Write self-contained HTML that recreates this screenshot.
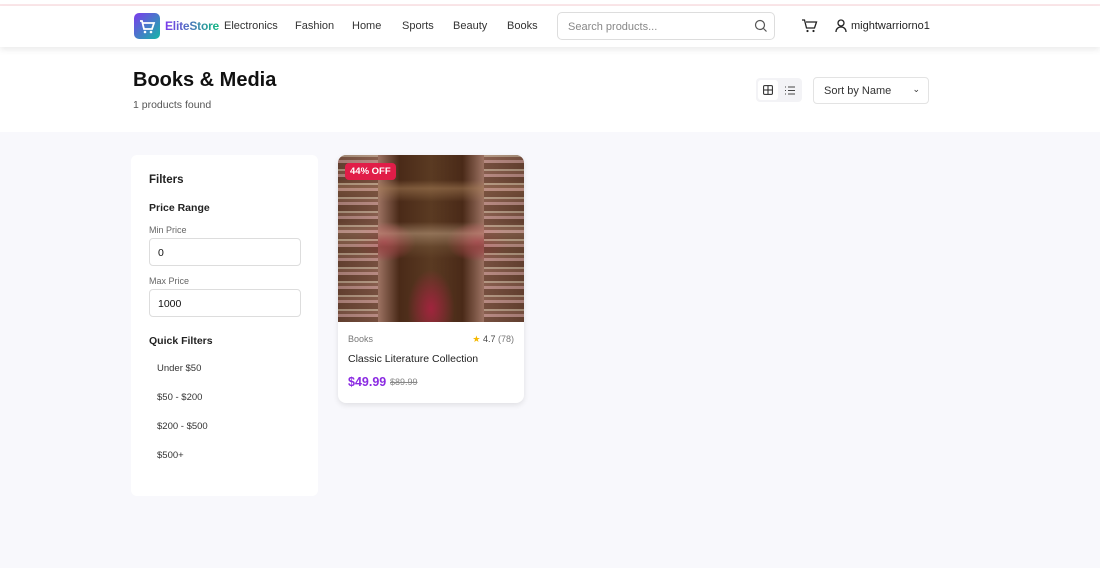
<!DOCTYPE html>
<html><head><meta charset="utf-8"><style>
*{box-sizing:border-box;margin:0;padding:0}
body{width:1100px;height:568px;overflow:hidden;background:#f8f8fc;font-family:"Liberation Sans",sans-serif;color:#111;position:relative}
.topline{position:absolute;left:0;top:0;width:1100px;height:6px;background:#fff;border-bottom:2px solid #fbe6e9}
header{position:absolute;left:0;top:6px;width:1100px;height:41px;background:#fff;box-shadow:0 3px 6px rgba(0,0,0,.08);z-index:2}
.logo{position:absolute;left:134px;top:7px;width:26px;height:26px;border-radius:5px;background:linear-gradient(135deg,#7c3aed,#14b8a6)}
.brand{position:absolute;left:165px;top:13px;font-size:12px;font-weight:bold;letter-spacing:-0.2px;background:linear-gradient(90deg,#7c3aed,#10b981);-webkit-background-clip:text;color:transparent}
.nav{position:absolute;top:14px;font-size:11px;color:#333}
.search{position:absolute;left:557px;top:6px;width:218px;height:28px;border:1px solid #ddd;border-radius:5px;font-size:11px;color:#888;padding:8px 10px}
.hero{position:absolute;left:0;top:47px;width:1100px;height:85px;background:#fff}
h1{position:absolute;left:133px;top:22px;font-size:20px;font-weight:bold}
.found{position:absolute;left:133px;top:52px;font-size:10.5px;color:#555}
.vt{position:absolute;left:756px;top:31px;width:46px;height:24px;background:#f3f3f6;border-radius:4px}
.vt .a{position:absolute;left:2px;top:2px;width:20px;height:20px;background:#fff;border-radius:3px}
.sort{position:absolute;left:813px;top:30px;width:116px;height:27px;border:1px solid #e3e3e3;border-radius:4px;font-size:11px;color:#333;padding:7px 10px}
.side{position:absolute;left:131px;top:155px;width:187px;height:341px;background:#fff;border-radius:6px}
.side .t{position:absolute;left:18px;font-weight:bold;color:#222}
.lbl{position:absolute;left:18px;font-size:9px;color:#666}
.inp{position:absolute;left:18px;width:152px;height:28px;border:1px solid #ddd;border-radius:4px;font-size:10.5px;padding:8px 8px}
.qf{position:absolute;left:26px;font-size:9.5px;color:#333}
.card{position:absolute;left:338px;top:155px;width:186px;height:248px;background:#fff;border-radius:8px;box-shadow:0 2px 6px rgba(0,0,0,.1);overflow:hidden}
.img{position:absolute;left:0;top:0;width:186px;height:167px;background:
linear-gradient(180deg,transparent 0,transparent 40%,rgba(190,160,130,.55) 47%,rgba(120,90,60,.4) 55%,transparent 62%),
radial-gradient(ellipse at 50% 92%,#a0243d 0,transparent 18%),
radial-gradient(ellipse at 25% 52%,#b0304a 0,transparent 16%),
radial-gradient(ellipse at 75% 52%,#b0304a 0,transparent 16%),
linear-gradient(180deg,transparent 0,transparent 15%,rgba(170,130,90,.5) 20%,transparent 28%),
linear-gradient(90deg,#6a4a3a 0,#9a7060 22%,#4a2a18 33%,#5a3a22 50%,#4a2a18 67%,#9a7060 78%,#6a4a3a 100%)}
.shelf{position:absolute;top:0;width:40px;height:167px;background:repeating-linear-gradient(180deg,#c9b8a0 0 2px,#7a5040 2px 5px,#d0a0a0 5px 8px,#5a3525 8px 14px);opacity:.55}
.badge{position:absolute;left:7px;top:8px;background:#e11d48;color:#fff;font-size:9.5px;font-weight:bold;padding:3px 5px;border-radius:4px}
</style></head><body>
<div class="topline"></div>
<header>
<div class="logo"><svg width="26" height="26" viewBox="0 0 26 26"><path d="M6 8h2l2 8h8l2-6H9" fill="none" stroke="#fff" stroke-width="1.8"/><circle cx="11" cy="19" r="1.3" fill="#fff"/><circle cx="17" cy="19" r="1.3" fill="#fff"/></svg></div>
<div class="brand">EliteStore</div>
<div class="nav" style="left:224px">Electronics</div>
<div class="nav" style="left:295px">Fashion</div>
<div class="nav" style="left:352px">Home</div>
<div class="nav" style="left:402px">Sports</div>
<div class="nav" style="left:453px">Beauty</div>
<div class="nav" style="left:507px">Books</div>
<div class="search">Search products...</div>
<svg style="position:absolute;left:754px;top:13px" width="14" height="14" viewBox="0 0 14 14"><circle cx="6" cy="6" r="4.5" fill="none" stroke="#555" stroke-width="1.2"/><path d="M9.5 9.5l3 3" stroke="#555" stroke-width="1.2"/></svg>
<svg style="position:absolute;left:801px;top:12px" width="17" height="16" viewBox="0 0 17 16"><path d="M1 2h2.5l2 8h8l2-6H5" fill="none" stroke="#222" stroke-width="1.3"/><circle cx="6.5" cy="13" r="1.1" fill="#222"/><circle cx="12.5" cy="13" r="1.1" fill="#222"/></svg>
<svg style="position:absolute;left:834px;top:12px" width="14" height="15" viewBox="0 0 14 15"><circle cx="7" cy="5" r="3" fill="none" stroke="#222" stroke-width="1.3"/><path d="M2 14c0-3 2-5 5-5s5 2 5 5" fill="none" stroke="#222" stroke-width="1.3"/></svg>
<div class="nav" style="left:851px;color:#222">mightwarriorno1</div>
</header>
<div class="hero">
<h1>Books &amp; Media</h1>
<div class="found">1 products found</div>
<div class="vt"><div class="a"></div>
<svg style="position:absolute;left:7px;top:7px" width="10" height="10" viewBox="0 0 10 10"><rect x="0.6" y="0.6" width="8.8" height="8.8" rx="1" fill="none" stroke="#222"/><path d="M5 1v8M1 5h8" stroke="#222"/></svg>
<svg style="position:absolute;left:29px;top:8px" width="10" height="9" viewBox="0 0 10 9"><path d="M3 1h7M3 4.5h7M3 8h7M0 1h1M0 4.5h1M0 8h1" stroke="#444"/></svg></div>
<div class="sort">Sort by Name<span style="position:absolute;right:8px;top:6px;font-size:9px">⌄</span></div>
</div>
<div class="side">
<div class="t" style="top:19px;font-size:11.5px">Filters</div>
<div class="t" style="top:47px;font-size:10.5px">Price Range</div>
<div class="lbl" style="top:70px">Min Price</div>
<div class="inp" style="top:83px">0</div>
<div class="lbl" style="top:121px">Max Price</div>
<div class="inp" style="top:134px">1000</div>
<div class="t" style="top:180px;font-size:10.5px">Quick Filters</div>
<div class="qf" style="top:208px">Under $50</div>
<div class="qf" style="top:237px">$50 - $200</div>
<div class="qf" style="top:266px">$200 - $500</div>
<div class="qf" style="top:295px">$500+</div>
</div>
<div class="card">
<div class="img"></div>
<div class="shelf" style="left:0"></div>
<div class="shelf" style="right:0"></div>
<div class="badge">44% OFF</div>
<div style="position:absolute;left:10px;top:179px;font-size:9px;color:#777">Books</div>
<div style="position:absolute;right:10px;top:179px;font-size:9px;color:#777"><span style="color:#f5b800">★</span> <span style="color:#444">4.7</span> (78)</div>
<div style="position:absolute;left:10px;top:198px;font-size:10.5px;color:#222">Classic Literature Collection</div>
<div style="position:absolute;left:10px;top:220px;font-size:12.5px;font-weight:bold;color:#8b2be2">$49.99</div>
<div style="position:absolute;left:52px;top:222px;font-size:9px;color:#888;text-decoration:line-through">$89.99</div>
</div>
</body></html>
